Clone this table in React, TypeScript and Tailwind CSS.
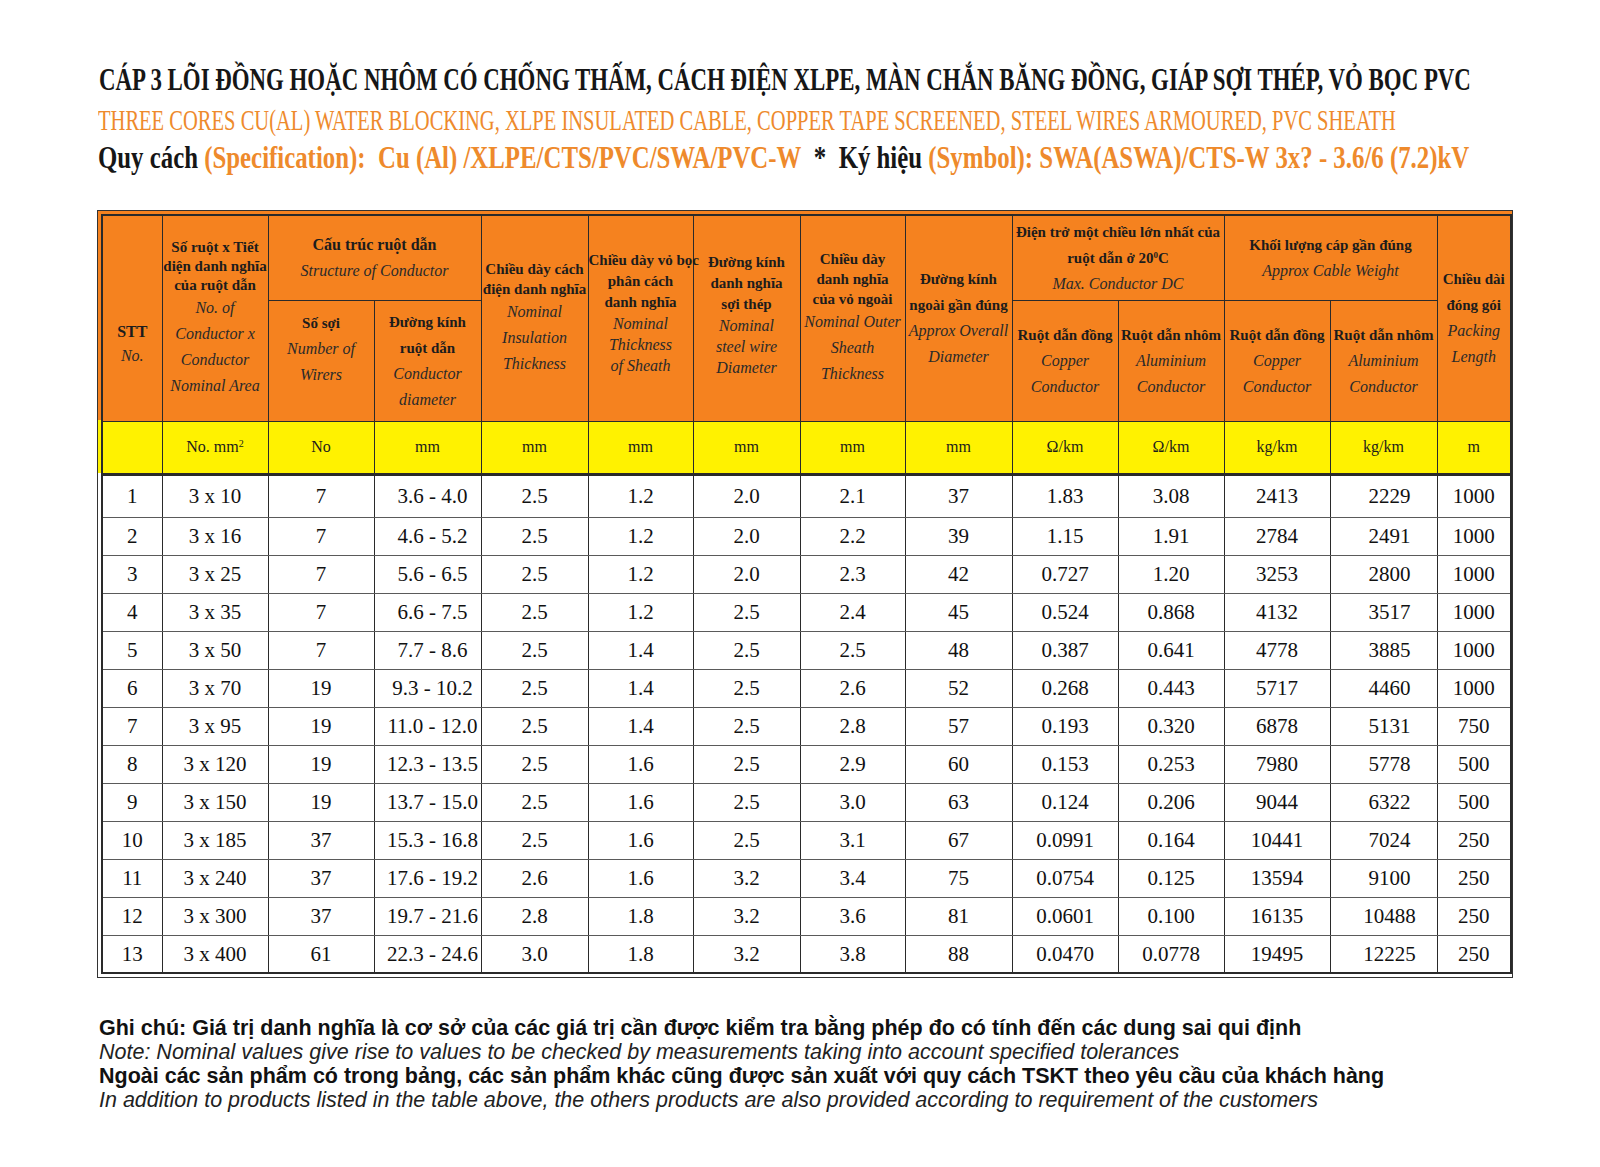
import { useLayoutEffect, useRef, useState, type ReactNode } from "react";

const ROWS = [
  ["1", "3 x 10", "7", "3.6 - 4.0", "2.5", "1.2", "2.0", "2.1", "37", "1.83", "3.08", "2413", "2229", "1000"],
  ["2", "3 x 16", "7", "4.6 - 5.2", "2.5", "1.2", "2.0", "2.2", "39", "1.15", "1.91", "2784", "2491", "1000"],
  ["3", "3 x 25", "7", "5.6 - 6.5", "2.5", "1.2", "2.0", "2.3", "42", "0.727", "1.20", "3253", "2800", "1000"],
  ["4", "3 x 35", "7", "6.6 - 7.5", "2.5", "1.2", "2.5", "2.4", "45", "0.524", "0.868", "4132", "3517", "1000"],
  ["5", "3 x 50", "7", "7.7 - 8.6", "2.5", "1.4", "2.5", "2.5", "48", "0.387", "0.641", "4778", "3885", "1000"],
  ["6", "3 x 70", "19", "9.3 - 10.2", "2.5", "1.4", "2.5", "2.6", "52", "0.268", "0.443", "5717", "4460", "1000"],
  ["7", "3 x 95", "19", "11.0 - 12.0", "2.5", "1.4", "2.5", "2.8", "57", "0.193", "0.320", "6878", "5131", "750"],
  ["8", "3 x 120", "19", "12.3 - 13.5", "2.5", "1.6", "2.5", "2.9", "60", "0.153", "0.253", "7980", "5778", "500"],
  ["9", "3 x 150", "19", "13.7 - 15.0", "2.5", "1.6", "2.5", "3.0", "63", "0.124", "0.206", "9044", "6322", "500"],
  ["10", "3 x 185", "37", "15.3 - 16.8", "2.5", "1.6", "2.5", "3.1", "67", "0.0991", "0.164", "10441", "7024", "250"],
  ["11", "3 x 240", "37", "17.6 - 19.2", "2.6", "1.6", "3.2", "3.4", "75", "0.0754", "0.125", "13594", "9100", "250"],
  ["12", "3 x 300", "37", "19.7 - 21.6", "2.8", "1.8", "3.2", "3.6", "81", "0.0601", "0.100", "16135", "10488", "250"],
  ["13", "3 x 400", "61", "22.3 - 24.6", "3.0", "1.8", "3.2", "3.8", "88", "0.0470", "0.0778", "19495", "12225", "250"],
];

const COLS = [60, 106, 106, 107, 107, 105, 107, 105, 107, 106, 106, 106, 107, 74];
const UNITS = ["", "No. mm", "No", "mm", "mm", "mm", "mm", "mm", "mm", "Ω/km", "Ω/km", "kg/km", "kg/km", "m"];

// squeezes a line sideways so it spans the given width, like the condensed title face
function FitLine({ width, className, children }: { width: number; className: string; children: ReactNode }) {
  const ref = useRef<HTMLSpanElement>(null);
  const [scale, setScale] = useState(1);
  useLayoutEffect(() => {
    const fit = () => {
      if (ref.current) setScale(width / ref.current.offsetWidth);
    };
    fit();
    document.fonts?.ready.then(fit);
  }, [width]);
  return (
    <span ref={ref} className={`inline-block origin-left whitespace-nowrap ${className}`} style={{ transform: `scaleX(${scale})` }}>
      {children}
    </span>
  );
}

const th = "border border-[#2a2a2a] bg-[#f5821f] p-0 text-center align-middle font-normal text-[#1c1c1c]";
const b = "block whitespace-nowrap font-bold text-[15px]";
const it = "block whitespace-nowrap italic text-[16px] text-[#2a2a2a]";

export default function App() {
  return (
    <div className="min-h-[1167px] w-[1600px] overflow-hidden bg-white pt-[59px] font-['Liberation_Serif',serif]">
      <div className="ml-[99px] h-[43px] w-[1420px] overflow-hidden">
        <FitLine width={1372} className="text-[32px] leading-[40px] font-bold text-[#161616]">
          CÁP 3 LÕI ĐỒNG HOẶC NHÔM CÓ CHỐNG THẤM, CÁCH ĐIỆN XLPE, MÀN CHẮN BĂNG ĐỒNG, GIÁP SỢI THÉP, VỎ BỌC PVC
        </FitLine>
      </div>
      <div className="ml-[98px] h-[36px] w-[1420px] overflow-hidden">
        <FitLine width={1298} className="text-[30px] leading-[36px] text-[#ee8a2c]">
          THREE CORES CU(AL) WATER BLOCKING, XLPE INSULATED CABLE, COPPER TAPE SCREENED, STEEL WIRES ARMOURED, PVC SHEATH
        </FitLine>
      </div>
      <div className="mb-[32px] ml-[98px] h-[40px] w-[1420px] overflow-hidden">
        <FitLine width={1371} className="text-[31px] leading-[40px] font-bold text-[#161616]">
          Quy cách <span className="text-[#ee8a2c]">(Specification):&nbsp; Cu (Al) /XLPE/CTS/PVC/SWA/PVC-W</span>&nbsp; *&nbsp; Ký hiệu{" "}
          <span className="text-[#ee8a2c]">(Symbol): SWA(ASWA)/CTS-W 3x? - 3.6/6 (7.2)kV</span>
        </FitLine>
      </div>

      <div className="ml-[97px] w-[1416px] border border-[#333] bg-[linear-gradient(to_bottom,#f5821f_209px,#fff200_209px,#fff200_262px,#ffffff_262px)] p-[3px]">
        <table className="w-full table-fixed border-collapse border-2 border-[#2a2a2a]">
          <colgroup>
            {COLS.map((w, i) => (
              <col key={i} style={{ width: w }} />
            ))}
          </colgroup>
          <thead>
            <tr className="h-[85px]">
              <th rowSpan={2} className={`${th} pt-[52px]`}>
                <span className={`${b} text-[16px] leading-[24px]`}>STT</span>
                <span className={`${it} leading-[24px]`}>No.</span>
              </th>
              <th rowSpan={2} className={th}>
                <span className={`${b} leading-[19px]`}>Số ruột x Tiết</span>
                <span className={`${b} leading-[19px]`}>diện danh nghĩa</span>
                <span className={`${b} leading-[19px]`}>của ruột dẫn</span>
                <span className={`${it} leading-[26px]`}>No. of</span>
                <span className={`${it} leading-[26px]`}>Conductor x</span>
                <span className={`${it} leading-[26px]`}>Conductor</span>
                <span className={`${it} leading-[26px]`}>Nominal Area</span>
              </th>
              <th colSpan={2} className={th}>
                <span className={`${b} text-[16px] leading-[26px]`}>Cấu trúc ruột dẫn</span>
                <span className={`${it} text-[15px] leading-[26px]`}>Structure of Conductor</span>
              </th>
              <th rowSpan={2} className={th}>
                <span className={`${b} leading-[20px]`}>Chiều dày cách</span>
                <span className={`${b} leading-[20px]`}>điện danh nghĩa</span>
                <span className={`${it} leading-[26px]`}>Nominal</span>
                <span className={`${it} leading-[26px]`}>Insulation</span>
                <span className={`${it} leading-[26px]`}>Thickness</span>
              </th>
              <th rowSpan={2} className={`${th} pb-[10px]`}>
                <span className={`${b} text-[14px] leading-[21px]`}>Chiều dày vỏ bọc</span>
                <span className={`${b} leading-[21px]`}>phân cách</span>
                <span className={`${b} leading-[21px]`}>danh nghĩa</span>
                <span className={`${it} leading-[21px]`}>Nominal</span>
                <span className={`${it} leading-[21px]`}>Thickness</span>
                <span className={`${it} leading-[21px]`}>of Sheath</span>
              </th>
              <th rowSpan={2} className={`${th} pb-[6px]`}>
                <span className={`${b} leading-[21px]`}>Đường kính</span>
                <span className={`${b} leading-[21px]`}>danh nghĩa</span>
                <span className={`${b} leading-[21px]`}>sợi thép</span>
                <span className={`${it} leading-[21px]`}>Nominal</span>
                <span className={`${it} leading-[21px]`}>steel wire</span>
                <span className={`${it} leading-[21px]`}>Diameter</span>
              </th>
              <th rowSpan={2} className={th}>
                <span className={`${b} leading-[20px]`}>Chiều dày</span>
                <span className={`${b} leading-[20px]`}>danh nghĩa</span>
                <span className={`${b} leading-[20px]`}>của vỏ ngoài</span>
                <span className={`${it} leading-[26px]`}>Nominal Outer</span>
                <span className={`${it} leading-[26px]`}>Sheath</span>
                <span className={`${it} leading-[26px]`}>Thickness</span>
              </th>
              <th rowSpan={2} className={th}>
                <span className={`${b} leading-[26px]`}>Đường kính</span>
                <span className={`${b} leading-[26px]`}>ngoài gần đúng</span>
                <span className={`${it} leading-[26px]`}>Approx Overall</span>
                <span className={`${it} leading-[26px]`}>Diameter</span>
              </th>
              <th colSpan={2} className={th}>
                <span className={`${b} text-[14px] leading-[26px]`}>Điện trở một chiều lớn nhất của</span>
                <span className={`${b} leading-[26px]`}>
                  ruột dẫn ở 20<sup className="text-[9px]">0</sup>C
                </span>
                <span className={`${it} text-[15px] leading-[26px]`}>Max. Conductor DC</span>
              </th>
              <th colSpan={2} className={th}>
                <span className={`${b} leading-[26px]`}>Khối lượng cáp gần đúng</span>
                <span className={`${it} text-[15px] leading-[26px]`}>Approx Cable Weight</span>
              </th>
              <th rowSpan={2} className={th}>
                <span className={`${b} leading-[26px]`}>Chiều dài</span>
                <span className={`${b} leading-[26px]`}>đóng gói</span>
                <span className={`${it} leading-[26px]`}>Packing</span>
                <span className={`${it} leading-[26px]`}>Length</span>
              </th>
            </tr>
            <tr className="h-[121px]">
              <th className={`${th} pb-[24px]`}>
                <span className={`${b} leading-[26px]`}>Số sợi</span>
                <span className={`${it} leading-[26px]`}>Number of</span>
                <span className={`${it} leading-[26px]`}>Wirers</span>
              </th>
              <th className={th}>
                <span className={`${b} leading-[26px]`}>Đường kính</span>
                <span className={`${b} leading-[26px]`}>ruột dẫn</span>
                <span className={`${it} leading-[26px]`}>Conductor</span>
                <span className={`${it} leading-[26px]`}>diameter</span>
              </th>
              {["Ruột dẫn đồng", "Ruột dẫn nhôm", "Ruột dẫn đồng", "Ruột dẫn nhôm"].map((t, i) => (
                <th key={i} className={th}>
                  <span className={`${b} leading-[26px]`}>{t}</span>
                  <span className={`${it} leading-[26px]`}>{i % 2 === 0 ? "Copper" : "Aluminium"}</span>
                  <span className={`${it} leading-[26px]`}>Conductor</span>
                </th>
              ))}
            </tr>
            <tr className="h-[53px]">
              {UNITS.map((u, i) => (
                <th key={i} className="border border-b-[3px] border-[#2a2a2a] bg-[#fff200] p-0 text-center align-middle text-[16px] font-normal text-[#1c1c1c]">
                  {u}
                  {i === 1 && <sup className="text-[10px]">2</sup>}
                </th>
              ))}
            </tr>
          </thead>
          <tbody>
            {ROWS.map((row, r) => (
              <tr key={r} className={r === 0 ? "h-[43px]" : "h-[38px]"}>
                {row.map((v, c) => (
                  <td
                    key={c}
                    className={`border border-[#2a2a2a] border-b-[#5a5a5a] p-0 text-center align-middle text-[21px] leading-[24px] whitespace-nowrap text-[#111] ${
                      c === 3 ? "pl-[10px]" : c === 12 ? "pl-[12px]" : ""
                    }`}
                  >
                    {v}
                  </td>
                ))}
              </tr>
            ))}
          </tbody>
        </table>
      </div>

      <div className="ml-[99px] mt-[38px] font-['Liberation_Sans',Arial,sans-serif] text-[21.5px] leading-[24px] text-[#111]">
        <p className="font-bold">Ghi chú: Giá trị danh nghĩa là cơ sở của các giá trị cần được kiểm tra bằng phép đo có tính đến các dung sai qui định</p>
        <p className="italic text-[#222]">Note: Nominal values give rise to values to be checked by measurements taking into account specified tolerances</p>
        <p className="font-bold">Ngoài các sản phẩm có trong bảng, các sản phẩm khác cũng được sản xuất với quy cách TSKT theo yêu cầu của khách hàng</p>
        <p className="italic text-[#222]">In addition to products listed in the table above, the others products are also provided according to requirement of the customers</p>
      </div>
    </div>
  );
}
